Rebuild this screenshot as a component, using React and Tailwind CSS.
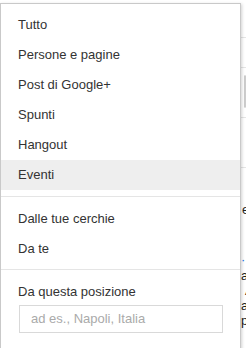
import React from 'react';

const items = ['Tutto', 'Persone e pagine', 'Post di Google+', 'Spunti', 'Hangout', 'Eventi'];
const circles = ['Dalle tue cerchie', 'Da te'];

export default function App() {
  return (
    <div className="relative w-[246px] h-[348px] overflow-hidden bg-white font-['Liberation_Sans',Arial,sans-serif]">
      {/* page behind the menu, only its left edge peeks out */}
      <div className="flex flex-col pl-[241px] text-[13px] text-[#222]">
        <div className="h-[37px]" />
        <div className="h-px bg-[#e5e5e5]" />
        <div className="h-[29px]" />
        <div className="h-px bg-[#e5e5e5]" />
        <div className="h-[7px]" />
        <div className="ml-[3px] h-[33px] border border-[#ccc] rounded-[2px]" />
        <div className="h-[9px]" />
        <div className="h-px bg-[#e5e5e5]" />
        <div className="h-[49px]" />
        <div className="h-px bg-[#e5e5e5]" />
        <div className="h-[50px] flex items-end leading-[16px] pl-[1px]">e</div>
        <div className="h-[50px] flex items-end leading-[16px] text-[#1a73e8]">·</div>
        <div className="leading-[15px] whitespace-nowrap">an</div>
        <div className="leading-[15px] whitespace-nowrap pl-[4px]">A</div>
        <div className="leading-[15px] whitespace-nowrap">ag</div>
        <div className="leading-[15px] whitespace-nowrap">pi</div>
      </div>

      {/* dropdown menu */}
      <div className="absolute left-0 top-[3px] w-[241px] h-[360px] bg-white border border-[#c9c9c9] shadow-[1px_1px_3px_rgba(0,0,0,0.18)] text-[13px] text-[#333]">
        <div className="pt-[6px]">
          {items.map((label) => (
            <div
              key={label}
              className={`h-[30px] flex items-center px-[17px] ${label === 'Eventi' ? 'bg-[#eeeeee]' : ''}`}
            >
              {label}
            </div>
          ))}
        </div>
        <div className="mt-[6px] mb-[7px] h-px bg-[#e5e5e5]" />
        {circles.map((label) => (
          <div key={label} className="h-[30px] flex items-center px-[17px]">
            {label}
          </div>
        ))}
        <div className="mt-[5px] h-px bg-[#e5e5e5]" />
        <div className="pt-[13px] px-[17px] leading-[18px]">Da questa posizione</div>
        <div className="mt-[4px] ml-[18px] w-[204px] h-[28px] border border-[#d9d9d9] flex items-center pl-[11px] text-[#aaaaaa]">
          ad es., Napoli, Italia
        </div>
      </div>
    </div>
  );
}
